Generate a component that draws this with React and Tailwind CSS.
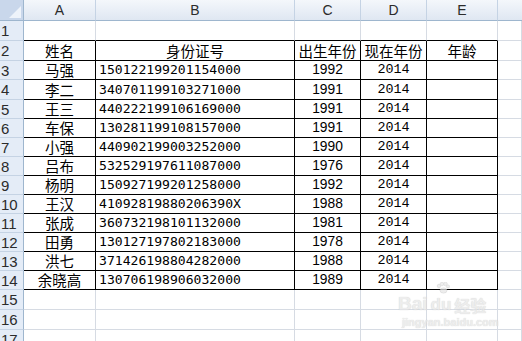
import React from 'react';

const rows = [
  ['马强', '150122199201154000', '1992'],
  ['李二', '340701199103271000', '1991'],
  ['王三', '440222199106169000', '1991'],
  ['车保', '130281199108157000', '1991'],
  ['小强', '440902199003252000', '1990'],
  ['吕布', '532529197611087000', '1976'],
  ['杨明', '150927199201258000', '1992'],
  ['王汉', '41092819880206390X', '1988'],
  ['张成', '360732198101132000', '1981'],
  ['田勇', '130127197802183000', '1978'],
  ['洪七', '371426198804282000', '1988'],
  ['余晓高', '130706198906032000', '1989'],
];

const cjk = "font-['Noto_Sans_CJK_SC',sans-serif] text-[14.5px] leading-[18px] text-black";
const idFont = "font-['DejaVu_Sans_Mono',monospace] text-[13.1px] leading-[18px] text-black";
const mono = "font-['Liberation_Mono',monospace] text-[13.4px] leading-[18px] text-black";
const sans = "font-['Liberation_Sans',sans-serif] text-[13.8px] leading-[18px] text-black";

// one sheet cell; r = sheet row (1-based), c = column index (1 = A)
const Cell = ({ r, c, className = '', children }) => {
  const inTable = r >= 2 && r <= 14 && c >= 1 && c <= 5;
  const right = inTable ? 'border-r-black' : 'border-r-[#d6dbe3]';
  const bottom = r >= 1 && r <= 14 && c >= 1 && c <= 5 ? 'border-b-black' : 'border-b-[#d6dbe3]';
  return (
    <div className={`flex items-center whitespace-nowrap border-r border-b bg-white ${right} ${bottom} ${className}`}>
      {children}
    </div>
  );
};

const RowHead = ({ n }) => (
  <div className="flex items-center pl-[1px] bg-[#e4ecf7] border-r border-b border-r-[#9eb6ce] border-b-[#c5d3e4] font-['Liberation_Sans',sans-serif] text-[15px] leading-none text-[#2b2b2b]">
    {n}
  </div>
);

const SheetRow = ({ r, cells = [] }) => (
  <>
    <RowHead n={r} />
    {[1, 2, 3, 4, 5, 6].map((c) => {
      const cell = cells[c - 1];
      return (
        <Cell key={c} r={r} c={c} className={cell ? cell.cls : ''}>
          {cell ? cell.text : null}
        </Cell>
      );
    })}
  </>
);

const ColHead = ({ label, last }) => (
  <div className={`flex items-center justify-center bg-gradient-to-b from-[#f4f7fb] to-[#dfe7f2] border-b border-b-[#9eb6ce] ${last ? '' : 'border-r border-r-[#c5d3e4]'} font-['Liberation_Sans',sans-serif] text-[14px] leading-none text-[#2b2b2b]`}>
    {label}
  </div>
);

export default function App() {
  return (
    <div className="relative w-[522px] h-[341px] overflow-hidden bg-white">
      <div className="grid grid-cols-[24px_72px_199px_66px_66px_71px_1fr] grid-rows-[21px_20px_20px_19px_20px_19px_19px_19px_19px_19px_19px_19px_19px_19px_19px_20px_20px_20px]">
        <div className="relative bg-[#c9d7eb] border-r border-b border-r-[#9eb6ce] border-b-[#9eb6ce]">
          <svg className="absolute right-[2px] bottom-[2px]" width="12" height="12" viewBox="0 0 12 12">
            <polygon points="12,0 12,12 0,12" fill="#eef3fa" />
          </svg>
        </div>
        {['A', 'B', 'C', 'D', 'E', ''].map((l, i) => (
          <ColHead key={i} label={l} last={i === 5} />
        ))}

        <SheetRow r={1} />
        <SheetRow
          r={2}
          cells={[
            { text: '姓名', cls: `justify-center ${cjk}` },
            { text: '身份证号', cls: `justify-center ${cjk}` },
            { text: '出生年份', cls: `justify-center ${cjk}` },
            { text: '现在年份', cls: `justify-center ${cjk}` },
            { text: '年龄', cls: `justify-center ${cjk}` },
          ]}
        />
        {rows.map(([name, id, year], i) => (
          <SheetRow
            key={id}
            r={i + 3}
            cells={[
              { text: name, cls: `justify-center ${cjk}` },
              { text: id, cls: `pl-[3px] ${idFont}` },
              { text: year, cls: `justify-center ${sans}` },
              { text: '2014', cls: `justify-center ${mono}` },
              { text: '', cls: '' },
            ]}
          />
        ))}
        <SheetRow r={15} />
        <SheetRow r={16} />
        <SheetRow r={17} />
      </div>

      {/* watermark */}
      <div className="absolute left-[398px] top-[282px] w-[100px] pointer-events-none select-none opacity-70">
        <div className="relative flex items-end font-['Liberation_Sans',sans-serif] font-bold text-[19px] leading-none text-[#e6e6e6] [text-shadow:0_0_1px_#bdbdbd]">
          <span className="mt-[12px]">Bai</span>
          <span className="text-[17px] ml-[3px]">du</span>
          <span className="ml-[3px] font-['Noto_Sans_CJK_SC',sans-serif] text-[16px]">经验</span>
          <svg className="absolute left-[38px] top-0" width="14" height="12" viewBox="0 0 14 12">
            <circle cx="3" cy="4" r="1.8" fill="#e6e6e6" stroke="#c8c8c8" strokeWidth="0.6" />
            <circle cx="6" cy="2" r="1.8" fill="#e6e6e6" stroke="#c8c8c8" strokeWidth="0.6" />
            <circle cx="9.5" cy="2" r="1.8" fill="#e6e6e6" stroke="#c8c8c8" strokeWidth="0.6" />
            <circle cx="12" cy="4.5" r="1.6" fill="#e6e6e6" stroke="#c8c8c8" strokeWidth="0.6" />
            <ellipse cx="7.5" cy="8.5" rx="3.5" ry="2.6" fill="#e6e6e6" stroke="#c8c8c8" strokeWidth="0.6" />
          </svg>
        </div>
        <div className="mt-[4px] pl-[4px] font-['Liberation_Sans',sans-serif] font-bold text-[11px] leading-none text-[#e6e6e6] [text-shadow:0_0_1px_#bdbdbd]">
          jingyan.baidu.com
        </div>
      </div>
    </div>
  );
}
